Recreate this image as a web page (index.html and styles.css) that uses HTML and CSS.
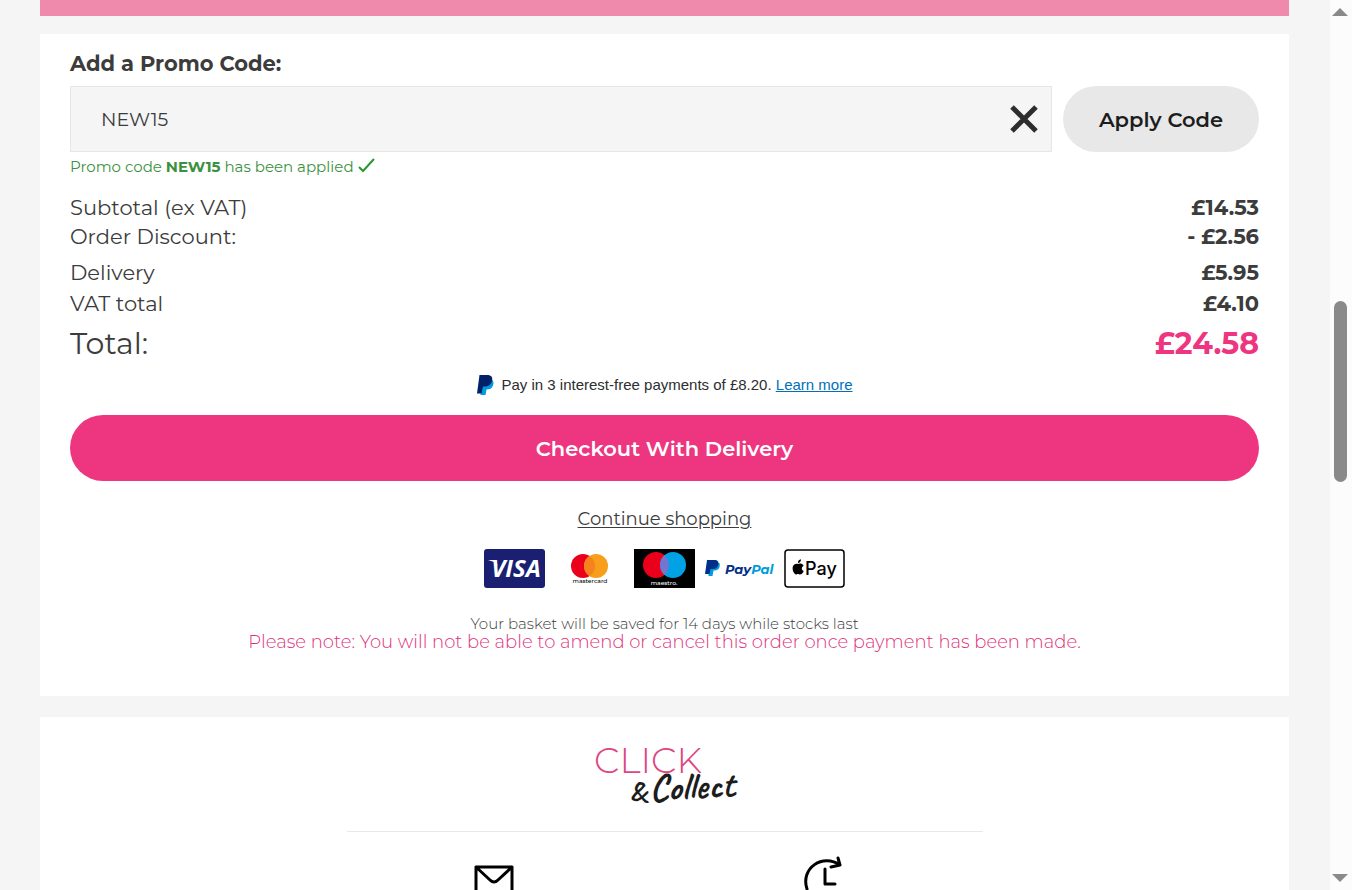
FILE: index.html
```html
<!DOCTYPE html>
<html lang="en">
<head>
  <meta charset="UTF-8">
  <meta name="viewport" content="width=device-width,initial-scale=1.0">
  <title>Your Basket</title>
  <link rel="stylesheet" href="styles.css">
</head>
<body>

  <main class="page">
    <div class="banner"></div>

    <section class="card basket">
      <form class="promo">
        <label for="promo-code">Add a Promo Code:</label>
        <div class="promo-row">
          <div class="promo-field">
            <input type="text" id="promo-code" value="NEW15">
            <button type="button" class="clear" aria-label="Remove code">
              <svg width="28" height="28" viewBox="0 0 28 28"><path d="M2 2 26 26M26 2 2 26"/></svg>
            </button>
          </div>
          <button type="submit" class="apply">Apply Code</button>
        </div>
        <p class="applied">Promo code <b>NEW15</b> has been applied
          <svg width="17" height="15" viewBox="0 0 17 15"><path d="M1 9 5 13 16 1"/></svg>
        </p>
      </form>

      <table class="totals">
        <tr><th>Subtotal (ex VAT)</th><td>£14.53</td></tr>
        <tr><th>Order Discount:</th><td>- £2.56</td></tr>
        <tr class="delivery"><th>Delivery</th><td>£5.95</td></tr>
        <tr class="vat"><th>VAT total</th><td>£4.10</td></tr>
        <tr class="total"><th>Total:</th><td>£24.58</td></tr>
      </table>

      <p class="pay-later">
        <svg width="18" height="22" viewBox="0 0 18 22">
          <path fill="#009cde" d="M6 5h9.500C17.500 7 18 9 17 11.500 16 14.500 13.500 15.500 10.500 15.500L9.500 21H4.500z"/>
          <path fill="#012169" d="M3.500 1H11c4.500 0 6 2.300 5 6-1 4-3.700 5.500-7.500 5.500H7L5.500 19.500H1z"/>
        </svg>
        <span>Pay in 3 interest-free payments of £8.20. <a href="#">Learn more</a></span>
      </p>

      <button type="button" class="checkout">Checkout With Delivery</button>
      <a href="#" class="continue">Continue shopping</a>

      <div class="cards">
        <svg width="61" height="39" viewBox="0 0 61 39">
          <rect width="61" height="39" rx="3" fill="#1a1f71"/>
          <path fill="#fff" d="M4 11h7l3 6-4-4z"/>
          <text x="32" y="28" class="visa">VISA</text>
        </svg>
        <svg class="mc" width="61" height="39" viewBox="0 0 61 39">
          <circle cx="24" cy="17" r="12" fill="#eb001b"/>
          <circle cx="37" cy="17" r="12" fill="#f79e1b"/>
          <path fill="#f5821f" d="M30.500 6.900a12 12 0 0 1 0 20.200 12 12 0 0 1 0-20.200z"/>
          <text x="31" y="34" class="mark">mastercard</text>
        </svg>
        <svg width="61" height="39" viewBox="0 0 61 39">
          <rect width="61" height="39"/>
          <circle cx="22" cy="16" r="13" fill="#eb001b"/>
          <circle cx="39" cy="16" r="13" fill="#00a2e5"/>
          <path fill="#7375cf" d="M30.500 6.200a13 13 0 0 1 0 19.600 13 13 0 0 1 0-19.600z"/>
          <text x="30" y="36" class="mark mark-light">maestro.</text>
        </svg>
        <svg width="69" height="39" viewBox="0 0 69 39">
          <path fill="#009cde" d="M4 14h10.500c1 5-1 7.500-6 7.500L7.500 27H3.500z"/>
          <path fill="#003087" d="M2 11h7c4 0 5 2 4.300 4.700-.8 3.300-3 4.300-6 4.300H5.500L4.500 25H0z"/>
          <text x="20" y="25" class="paypal"><tspan>Pay</tspan><tspan class="pal">Pal</tspan></text>
        </svg>
        <svg width="61" height="39" viewBox="0 0 61 39">
          <rect x="1" y="1" width="59" height="37" rx="3" fill="#fff" stroke="#000" stroke-width="1.500"/>
          <path d="M18 15c-1.500-.8-3-.5-4 0-1-.5-2.500-.5-3.700.5C8 17 8.500 21 9.500 23c1 2 2 3 3.500 2.300.7-.3 1.300-.3 2 0C16.500 26 18 25 19 23.500l.7-1.600c-2.500-1-2.500-4 0-5.200-.5-.7-1-1.300-1.700-1.700zM14 14c-.2-2 1-3.400 3-3.700.2 2-1.300 3.700-3 3.700z"/>
          <text x="21" y="26" class="apple">Pay</text>
        </svg>
      </div>

      <p class="saved">Your basket will be saved for 14 days while stocks last</p>
      <p class="notice">Please note: You will not be able to amend or cancel this order once payment has been made.</p>
    </section>

    <section class="card collect">
      <svg class="collect-logo" width="146" height="64" viewBox="0 0 146 64">
        <text x="2" y="29" class="click">CLICK</text>
        <text x="38" y="57" class="script script-and">&amp;</text>
        <text x="58" y="57" class="script" transform="rotate(-3 58 57)">Collect</text>
      </svg>
      <hr>
      <div class="options">
        <svg width="40" height="44" viewBox="0 0 40 44">
          <path d="M2 11h36v30H2zM2 11l14 13q4 4 8 0L38 11"/>
        </svg>
        <svg width="51" height="44" viewBox="0 0 51 44">
          <path d="M36 9C19-3-4 12 3 33M34 2l2 7-9 2M21 13v15h10"/>
        </svg>
      </div>
    </section>
  </main>

  <div class="scrollbar">
    <span class="arrow up"></span>
    <span class="thumb"></span>
    <span class="arrow down"></span>
  </div>

</body>
</html>
```

FILE: styles.css
```css
:root{
  --pink:#ee357f;
  --grey:#f5f5f5;
  --text:#3c3c3c;
}
*{box-sizing:border-box;margin:0;padding:0}
body{
  display:flex;
  height:100vh;
  overflow:hidden;
  background:var(--grey);
  color:var(--text);
  font-family:Montserrat,Inter,sans-serif;
}
button,input{font-family:inherit;color:inherit}
.page{
  flex:1;
  padding:0 41px 0 40px;
}
.banner{
  height:16px;
  margin-bottom:18px;
  background:#ef8aad;
}
.card{
  display:flex;
  flex-direction:column;
  align-items:center;
  background:#fff;
  margin-bottom:21px;
  padding:16px 30px 45px;
}
/* promo code */
.promo{width:100%}
.promo label{
  display:block;
  font-size:21px;
  line-height:28px;
  font-weight:700;
  margin-bottom:8px;
}
.promo-row{
  display:flex;
  gap:11px;
}
.promo-field{
  flex:1;
  display:flex;
  align-items:center;
  height:66px;
  padding-right:13px;
  background:var(--grey);
  border:1px solid #e6e6e6;
}
.promo-field input{
  flex:1;
  border:none;
  background:none;
  padding:0 30px;
  font-size:19px;
  font-weight:400;
  outline:none;
}
.clear{
  display:flex;
  border:none;
  background:none;
  cursor:pointer;
}
.clear path{stroke:#2d2d2d;stroke-width:5}
.apply{
  width:196px;
  height:66px;
  border:none;
  border-radius:33px;
  background:#e8e8e8;
  color:#1d1d1d;
  font-size:21px;
  font-weight:600;
  cursor:pointer;
}
.applied{
  font-size:15px;
  line-height:30px;
  font-weight:400;
  color:#3c9140;
}
.applied b{font-weight:700}
.applied svg{vertical-align:-1px}
.applied path{fill:none;stroke:#27992b;stroke-width:2}
/* totals */
.totals{
  width:100%;
  margin-top:11px;
  border-collapse:collapse;
  font-size:21px;
  line-height:29px;
}
.totals th{text-align:left;font-weight:400}
.totals td{text-align:right;font-weight:700}
.delivery th,.delivery td{padding-top:7px}
.vat th,.vat td{padding-top:2px}
.totals .total{font-size:30px;line-height:52px}
.total td{color:var(--pink)}
/* paypal */
.pay-later{
  display:flex;
  align-items:center;
  gap:7px;
  margin-top:3px;
  font:15px/24px "Liberation Sans",Arial,sans-serif;
  color:#2c2e2f;
}
.pay-later a{color:#0070ba}
.checkout{
  width:100%;
  height:66px;
  margin:18px 0 26px;
  border:none;
  border-radius:33px;
  background:var(--pink);
  color:#fff;
  font-size:21px;
  font-weight:600;
  cursor:pointer;
}
.continue{
  color:inherit;
  font-size:18px;
  line-height:24px;
  font-weight:400;
  text-underline-offset:2px;
}
/* payment logos */
.cards{
  display:flex;
  gap:10px;
  margin:18px 0 27px;
}
.cards .mc{margin:0 4px}
.visa{font:italic 700 24px "Open Sans",sans-serif;fill:#fff;text-anchor:middle}
.mark{font:500 6px Montserrat,Inter,sans-serif;text-anchor:middle}
.mark-light{fill:#fff}
.paypal{font:italic 700 13px Montserrat,Inter,sans-serif;fill:#003087}
.pal{fill:#009cde}
.apple{font:500 18px Inter,sans-serif}
.saved{
  font-size:15px;
  line-height:18px;
  font-weight:300;
}
.notice{
  font-size:18px;
  line-height:18px;
  font-weight:300;
  color:#e0307a;
}
/* click & collect */
.collect{padding-top:27px}
.collect-logo{overflow:visible}
.click{font:300 36px Montserrat,Inter,sans-serif;fill:#e0467f}
.script{font:600 38px Caveat,"Dancing Script","Segoe Script",cursive;fill:#1d1d1d}
.script-and{font-size:28px}
.collect hr{
  width:636px;
  margin:23px 0 24px;
  border:none;
  border-top:1px solid #e8e8e8;
}
.options{
  display:flex;
  gap:290px;
}
.options path{
  fill:none;
  stroke:#000;
  stroke-width:3;
  stroke-linecap:round;
  stroke-linejoin:round;
}
/* scrollbar */
.scrollbar{
  display:flex;
  flex-direction:column;
  align-items:center;
  justify-content:space-between;
  width:22px;
  padding:8px 2px 8px 0;
  background:#fcfcfc;
}
.arrow{
  border:8px solid transparent;
  border-top-width:0;
  border-bottom:8px solid #8a8a8a;
}
.arrow.down{transform:rotate(180deg)}
.thumb{
  width:13px;
  height:181px;
  margin-bottom:108px;
  border-radius:7px;
  background:#8a8a8a;
}
```
